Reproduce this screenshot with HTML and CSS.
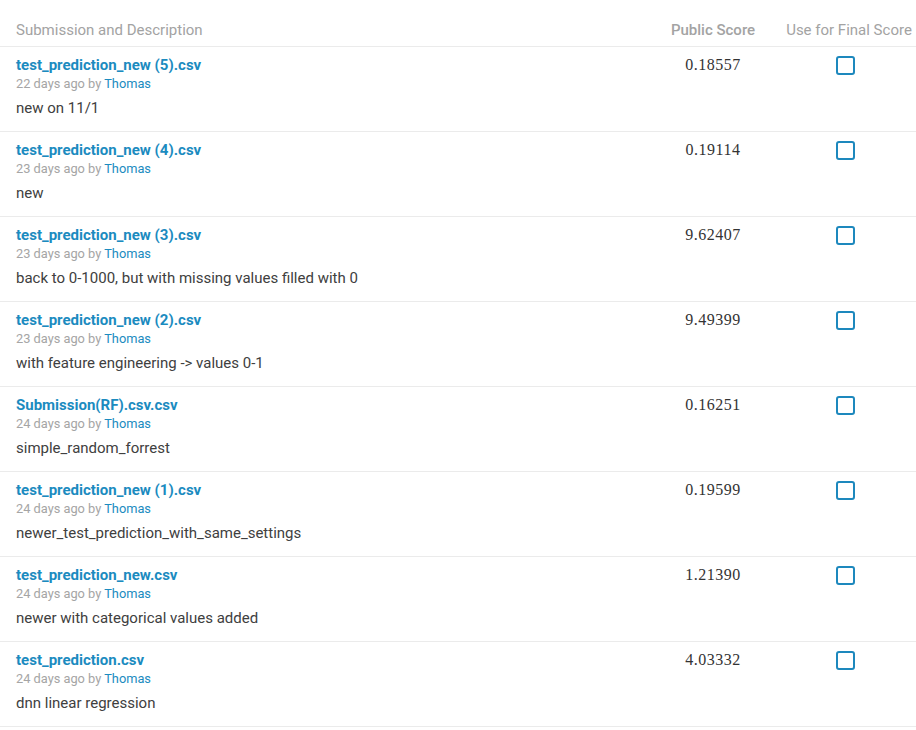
FILE: index.html
```html
<!DOCTYPE html>
<html>
<head>
<meta charset="utf-8">
<link rel="stylesheet" href="styles.css">
</head>
<body>
<div class="table">
  <div class="head">
    <div class="h-desc">Submission and Description</div>
    <div class="h-score">Public Score</div>
    <div class="h-final">Use for Final Score</div>
  </div>

  <div class="row">
    <div class="desc">
      <a class="title">test_prediction_new (5).csv</a>
      <div class="meta">22 days ago by <a class="user">Thomas</a></div>
      <div class="text">new on 11/1</div>
    </div>
    <div class="score">0.18557</div>
    <div class="final"><span class="box"></span></div>
  </div>

  <div class="row">
    <div class="desc">
      <a class="title">test_prediction_new (4).csv</a>
      <div class="meta">23 days ago by <a class="user">Thomas</a></div>
      <div class="text">new</div>
    </div>
    <div class="score">0.19114</div>
    <div class="final"><span class="box"></span></div>
  </div>

  <div class="row">
    <div class="desc">
      <a class="title">test_prediction_new (3).csv</a>
      <div class="meta">23 days ago by <a class="user">Thomas</a></div>
      <div class="text">back to 0-1000, but with missing values filled with 0</div>
    </div>
    <div class="score">9.62407</div>
    <div class="final"><span class="box"></span></div>
  </div>

  <div class="row">
    <div class="desc">
      <a class="title">test_prediction_new (2).csv</a>
      <div class="meta">23 days ago by <a class="user">Thomas</a></div>
      <div class="text">with feature engineering -&gt; values 0-1</div>
    </div>
    <div class="score">9.49399</div>
    <div class="final"><span class="box"></span></div>
  </div>

  <div class="row">
    <div class="desc">
      <a class="title">Submission(RF).csv.csv</a>
      <div class="meta">24 days ago by <a class="user">Thomas</a></div>
      <div class="text">simple_random_forrest</div>
    </div>
    <div class="score">0.16251</div>
    <div class="final"><span class="box"></span></div>
  </div>

  <div class="row">
    <div class="desc">
      <a class="title">test_prediction_new (1).csv</a>
      <div class="meta">24 days ago by <a class="user">Thomas</a></div>
      <div class="text">newer_test_prediction_with_same_settings</div>
    </div>
    <div class="score">0.19599</div>
    <div class="final"><span class="box"></span></div>
  </div>

  <div class="row">
    <div class="desc">
      <a class="title">test_prediction_new.csv</a>
      <div class="meta">24 days ago by <a class="user">Thomas</a></div>
      <div class="text">newer with categorical values added</div>
    </div>
    <div class="score">1.21390</div>
    <div class="final"><span class="box"></span></div>
  </div>

  <div class="row">
    <div class="desc">
      <a class="title">test_prediction.csv</a>
      <div class="meta">24 days ago by <a class="user">Thomas</a></div>
      <div class="text">dnn linear regression</div>
    </div>
    <div class="score">4.03332</div>
    <div class="final"><span class="box"></span></div>
  </div>
</div>
</body>
</html>
```

FILE: styles.css
```css
html, body {
  margin: 0;
  padding: 0;
  background: #fff;
}
body {
  font-family: Roboto, "Liberation Sans", Arial, sans-serif;
  color: #3c3c3c;
}
.table {
  width: 916px;
}
.head, .row {
  display: grid;
  grid-template-columns: 1fr 124px 134px;
  border-bottom: 1px solid #ebebeb;
  padding-left: 16px;
}
.head {
  height: 46px;
  align-items: end;
}
.head > div {
  font-size: 15px;
  line-height: 20px;
  padding-bottom: 6px;
  color: #a3a3a3;
}
.h-score {
  font-weight: 500;
  color: #a0a0a0;
  text-align: center;
  padding-right: 14px;
}
.h-final {
  text-align: center;
}
.row {
  height: 84px;
  box-sizing: content-box;
  align-items: start;
}
.desc {
  padding-top: 9px;
  display: flex;
  flex-direction: column;
  align-items: flex-start;
}
.title {
  font-size: 15px;
  font-weight: 700;
  line-height: 18px;
  color: #1b8bbf;
}
.meta {
  margin-top: 2px;
  font-size: 12.8px;
  line-height: 16px;
  color: #a5a5a5;
}
.user {
  color: #1b8bbf;
}
.text {
  margin-top: 6px;
  font-size: 15px;
  line-height: 20px;
  color: #404040;
}
.score {
  padding-top: 9px;
  padding-right: 14px;
  text-align: center;
  font-family: "Liberation Serif", "Times New Roman", serif;
  font-size: 16px;
  letter-spacing: 0.5px;
  line-height: 18px;
  color: #333;
}
.final {
  padding-top: 9px;
  padding-left: 54px;
}
.box {
  display: block;
  width: 15px;
  height: 15px;
  border: 2px solid #1d88bd;
  border-radius: 3px;
}
```
